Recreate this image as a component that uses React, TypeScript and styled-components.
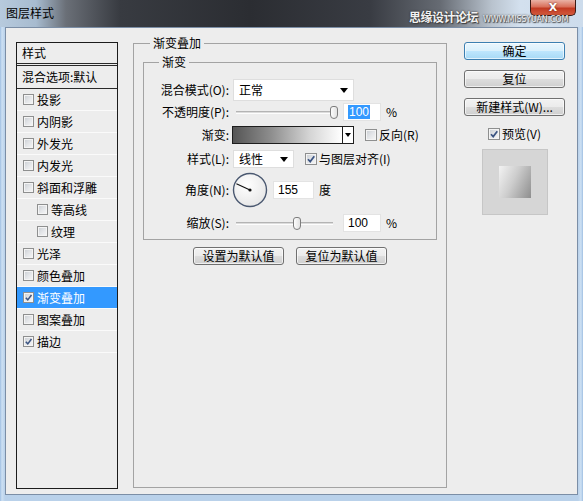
import React from "react";
import styled, { createGlobalStyle } from "styled-components";

const FONT = `"Noto Sans CJK SC", "Liberation Sans", sans-serif`;

const GlobalStyle = createGlobalStyle`
  html, body {
    margin: 0;
    padding: 0;
    background: #b9d1ea;
  }
  body {
    font-family: ${FONT};
    font-size: 12px;
    line-height: 16px;
    color: #000;
  }
  * {
    box-sizing: border-box;
  }
`;

const Window = styled.div`
  width: 583px;
  height: 501px;
  display: flex;
  flex-direction: column;
  overflow: hidden;
  background: linear-gradient(
    90deg,
    #9fbfe2 0,
    #cde0f3 2px,
    #b9d1ea 5px,
    #b9d1ea 578px,
    #cde0f3 581px,
    #9fbfe2 583px
  );
`;

const TitleBar = styled.div`
  position: relative;
  flex: none;
  height: 27px;
  display: flex;
  align-items: flex-start;
  padding-left: 6px;
  background: linear-gradient(
    90deg,
    #b7cadd 0,
    #a7bbcf 36px,
    #6a6f77 66px,
    #383b41 120px,
    #2b2d32 250px,
    #393c43 370px,
    #666b73 440px,
    #b9c3ce 492px,
    #d3e0ee 520px,
    #cddcec 100%
  );
`;

const Title = styled.span`
  line-height: 26px;
  font-size: 12px;
  color: #000;
`;

const Watermark = styled.div`
  position: absolute;
  z-index: 2;
  left: 409px;
  top: 10px;
  display: flex;
  align-items: baseline;
  gap: 5px;
  line-height: 13px;
  color: #f2f2f2;
  text-shadow: 0 0 2px #222, 1px 1px 1px #444;
  white-space: nowrap;
`;

const WatermarkCn = styled.span`
  font-size: 12px;
  font-weight: bold;
  letter-spacing: -0.5px;
`;

const WatermarkEn = styled.span`
  font-family: "DejaVu Sans", sans-serif;
  font-size: 8px;
  line-height: 8px;
  letter-spacing: -0.2px;
`;

const CloseButton = styled.div`
  position: relative;
  z-index: 1;
  margin-left: auto;
  margin-right: 7px;
  width: 46px;
  height: 16px;
  border: 1px solid #3b1b15;
  border-top: none;
  border-radius: 0 0 5px 5px;
  background: linear-gradient(#eab2a5 0, #d9705b 45%, #c23a22 55%, #d45a3e 100%);
  color: #fff;
  font-family: "DejaVu Sans", sans-serif;
  font-weight: bold;
  font-size: 11px;
  line-height: 12px;
  display: flex;
  align-items: center;
  justify-content: center;
  text-shadow: 0 0 2px #5a1a10;
`;

const Body = styled.div`
  flex: 1;
  margin: 0 5px 6px;
  border: 1px solid #7b8ea6;
  background: #ededed;
  display: flex;
  align-items: flex-start;
  padding: 7px 0 0 10px;
`;

/* ---------- left style list ---------- */

const StyleList = styled.div`
  flex: none;
  margin-top: 7px;
  width: 102px;
  height: 447px;
  border: 1px solid #1c1c1c;
`;

const ListHeader = styled.div`
  height: 23px;
  padding-left: 5px;
  line-height: 20px;
  border-bottom: 3px double #2a2a2a;
`;

const BlendRow = styled.div`
  height: 23px;
  padding-left: 5px;
  line-height: 22px;
  border-bottom: 1px solid #2a2a2a;
`;

const ListItem = styled.div<{ $indent?: boolean; $selected?: boolean }>`
  height: 22px;
  display: flex;
  align-items: center;
  gap: 3px;
  padding-left: ${({ $indent }) => ($indent ? 20 : 6)}px;
  border-bottom: 1px solid #fafafa;
  background: ${({ $selected }) => ($selected ? "#3399ff" : "transparent")};
  background-clip: padding-box;
  color: ${({ $selected }) => ($selected ? "#fff" : "#000")};
`;

/* ---------- checkbox ---------- */

const Box = styled.span<{ $size: number }>`
  flex: none;
  width: ${({ $size }) => $size}px;
  height: ${({ $size }) => $size}px;
  border: 1px solid #8e8f8f;
  background: linear-gradient(135deg, #c9cdd2 0, #e3e5e8 50%, #f7f7f7 100%);
  box-shadow: inset 0 0 0 1px #f4f4f4;
  display: flex;
  align-items: center;
  justify-content: center;
`;

const Check = ({ checked, size = 12 }: { checked?: boolean; size?: number }) => (
  <Box $size={size}>
    {checked && (
      <svg width={size - 2} height={size - 2} viewBox="0 0 10 10">
        <path d="M2 5.2 L4.2 7.6 L8.3 2.2" fill="none" stroke="#3b5482" strokeWidth="1.7" />
      </svg>
    )}
  </Box>
);

/* ---------- middle group ---------- */

const Group = styled.fieldset`
  flex: none;
  margin: 0 0 0 15px;
  width: 314px;
  height: 453px;
  padding: 0 9px;
  border: 1px solid #a3a3a3;
  min-inline-size: 0;
`;

const Legend = styled.legend<{ $offset: number }>`
  margin-left: ${({ $offset }) => $offset}px;
  padding: 0 3px;
  line-height: 16px;
  font-size: 12px;
`;

const SubGroup = styled.fieldset`
  margin: 3px 0 0;
  height: 186px;
  padding: 9px 0 0;
  border: 1px solid #a3a3a3;
  min-inline-size: 0;
`;

const FormRow = styled.div<{ $h: number }>`
  display: flex;
  align-items: center;
  height: ${({ $h }) => $h}px;
`;

const Label = styled.span`
  flex: none;
  width: 86px;
  padding-right: 1px;
  margin-right: 3px;
  text-align: right;
  white-space: nowrap;
`;

const Select = styled.div<{ $w: number; $h: number }>`
  width: ${({ $w }) => $w}px;
  height: ${({ $h }) => $h}px;
  background: #fff;
  border: 1px solid #dedede;
  display: flex;
  align-items: center;
  justify-content: space-between;
  padding: 0 5px 0 5px;
`;

const Arrow = styled.span`
  width: 0;
  height: 0;
  border-left: 4px solid transparent;
  border-right: 4px solid transparent;
  border-top: 5px solid #000;
`;

const Slider = styled.div<{ $w: number }>`
  position: relative;
  width: ${({ $w }) => $w}px;
  height: 14px;
  margin-left: 3px;
  display: flex;
  align-items: center;
`;

const Track = styled.div`
  width: 100%;
  height: 3px;
  border-top: 1px solid #b4b4b4;
  border-bottom: 1px solid #fdfdfd;
  background: #dcdcdc;
`;

const Thumb = styled.div`
  position: absolute;
  top: 1px;
  width: 8px;
  height: 13px;
  border: 1px solid #7d7d7d;
  border-radius: 3px 3px 4px 4px;
  background: linear-gradient(90deg, #fdfdfd, #e2e2e2);
`;

const NumberField = styled.div<{ $w: number; $gap?: number }>`
  width: ${({ $w }) => $w}px;
  height: 18px;
  margin-left: ${({ $gap = 6 }) => $gap}px;
  background: #fff;
  border: 1px solid #e3e3e3;
  padding-left: 4px;
  display: flex;
  align-items: center;
  font-family: "Liberation Sans", sans-serif;
  font-size: 12px;
`;

const Selected = styled.span`
  background: #3399ff;
  color: #fff;
  line-height: 14px;
  padding: 0 1px;
`;

const Unit = styled.span`
  margin-left: 5px;
`;

const GradientPicker = styled.div`
  width: 122px;
  height: 18px;
  margin-left: -1px;
  border: 1px solid #1e1e1e;
  display: flex;
`;

const GradientFill = styled.div`
  flex: 1;
  background: linear-gradient(90deg, #555 0, #8e8e8e 35%, #d4d4d4 70%, #fff 100%);
`;

const GradientArrow = styled.div`
  width: 11px;
  border-left: 1px solid #1e1e1e;
  background: #fff;
  display: flex;
  align-items: center;
  justify-content: center;
  & > span {
    border-left-width: 3px;
    border-right-width: 3px;
    border-top-width: 4px;
  }
`;

const CheckLabel = styled.label<{ $gap?: number }>`
  display: flex;
  align-items: center;
  gap: 2px;
  margin-left: ${({ $gap = 11 }) => $gap}px;
  white-space: nowrap;
`;

const Dial = styled.svg`
  flex: none;
  margin-left: -1px;
`;

const ButtonRow = styled.div`
  display: flex;
  justify-content: center;
  gap: 12px;
  margin-top: 7px;
`;

const Button = styled.div<{ $w?: number; $primary?: boolean }>`
  width: ${({ $w }) => ($w ? `${$w}px` : "100%")};
  height: 18px;
  border: 1px solid ${({ $primary }) => ($primary ? "#3c7fb1" : "#707070")};
  border-radius: 3px;
  background: ${({ $primary }) =>
    $primary
      ? "linear-gradient(#eaf6fd 0, #d9f0fc 50%, #bee6fd 51%, #a7d9f5 100%)"
      : "linear-gradient(#f2f2f2 0, #ebebeb 50%, #dddddd 51%, #cfcfcf 100%)"};
  box-shadow: inset 0 0 0 1px rgba(255, 255, 255, 0.65);
  display: flex;
  align-items: center;
  justify-content: center;
  line-height: 16px;
  white-space: nowrap;
`;

/* ---------- right column ---------- */

const Side = styled.div`
  flex: none;
  margin: 7px 0 0 17px;
  width: 101px;
  display: flex;
  flex-direction: column;
  align-items: center;
  gap: 10px;
`;

const PreviewBox = styled.div`
  margin-top: -3px;
  width: 66px;
  height: 66px;
  background: #d6d6d6;
  border: 1px solid #c6c6c6;
  display: flex;
  align-items: center;
  justify-content: center;
`;

const PreviewSwatch = styled.div`
  width: 32px;
  height: 32px;
  background: linear-gradient(115deg, #f3f3f3 0, #cdcdcd 45%, #8e8e8e 100%);
`;

const styleItems = [
  { name: "投影" },
  { name: "内阴影" },
  { name: "外发光" },
  { name: "内发光" },
  { name: "斜面和浮雕" },
  { name: "等高线", indent: true },
  { name: "纹理", indent: true },
  { name: "光泽" },
  { name: "颜色叠加" },
  { name: "渐变叠加", checked: true, selected: true },
  { name: "图案叠加" },
  { name: "描边", checked: true },
];

const angle = 155;
const rad = (angle * Math.PI) / 180;

const App = () => (
  <>
    <GlobalStyle />
    <Window>
      <TitleBar>
        <Title>图层样式</Title>
        <Watermark>
          <WatermarkCn>思缘设计论坛</WatermarkCn>
          <WatermarkEn>WWW.MISSYUAN.COM</WatermarkEn>
        </Watermark>
        <CloseButton>X</CloseButton>
      </TitleBar>
      <Body>
        <StyleList>
          <ListHeader>样式</ListHeader>
          <BlendRow>混合选项:默认</BlendRow>
          {styleItems.map((item) => (
            <ListItem key={item.name} $indent={item.indent} $selected={item.selected}>
              <Check checked={item.checked} size={11} />
              {item.name}
            </ListItem>
          ))}
        </StyleList>

        <Group>
          <Legend $offset={7}>渐变叠加</Legend>
          <SubGroup>
            <Legend $offset={15}>渐变</Legend>
            <FormRow $h={22}>
              <Label>混合模式(O):</Label>
              <Select $w={121} $h={22}>
                正常
                <Arrow />
              </Select>
            </FormRow>
            <FormRow $h={22}>
              <Label>不透明度(P):</Label>
              <Slider $w={101}>
                <Track />
                <Thumb style={{ left: 94 }} />
              </Slider>
              <NumberField $w={38}>
                <Selected>100</Selected>
              </NumberField>
              <Unit>%</Unit>
            </FormRow>
            <FormRow $h={24}>
              <Label>渐变:</Label>
              <GradientPicker>
                <GradientFill />
                <GradientArrow>
                  <Arrow />
                </GradientArrow>
              </GradientPicker>
              <CheckLabel>
                <Check />
                反向(R)
              </CheckLabel>
            </FormRow>
            <FormRow $h={24}>
              <Label>样式(L):</Label>
              <Select $w={61} $h={18}>
                线性
                <Arrow />
              </Select>
              <CheckLabel>
                <Check checked />
                与图层对齐(I)
              </CheckLabel>
            </FormRow>
            <FormRow $h={38}>
              <Label>角度(N):</Label>
              <Dial width="36" height="36" viewBox="0 0 36 36">
                <defs>
                  <radialGradient id="dialFill" cx="40%" cy="35%" r="70%">
                    <stop offset="0" stopColor="#ffffff" />
                    <stop offset="1" stopColor="#e6e6e6" />
                  </radialGradient>
                </defs>
                <circle cx="18" cy="18" r="16.5" fill="url(#dialFill)" stroke="#4a5870" strokeWidth="1.4" />
                <line
                  x1="18"
                  y1="18"
                  x2={18 + 15 * Math.cos(rad)}
                  y2={18 - 15 * Math.sin(rad)}
                  stroke="#111"
                  strokeWidth="1.1"
                />
                <circle cx="18" cy="18" r="1.6" fill="#111" />
              </Dial>
              <NumberField $w={41} $gap={5}>
                155
              </NumberField>
              <Unit>度</Unit>
            </FormRow>
            <FormRow $h={28}>
              <Label>缩放(S):</Label>
              <Slider $w={97}>
                <Track />
                <Thumb style={{ left: 57 }} />
              </Slider>
              <NumberField $w={38} $gap={10}>
                100
              </NumberField>
              <Unit>%</Unit>
            </FormRow>
          </SubGroup>
          <ButtonRow>
            <Button $w={91}>设置为默认值</Button>
            <Button $w={91}>复位为默认值</Button>
          </ButtonRow>
        </Group>

        <Side>
          <Button $primary>确定</Button>
          <Button>复位</Button>
          <Button>新建样式(W)...</Button>
          <CheckLabel $gap={0}>
            <Check checked />
            预览(V)
          </CheckLabel>
          <PreviewBox>
            <PreviewSwatch />
          </PreviewBox>
        </Side>
      </Body>
    </Window>
  </>
);

export default App;
